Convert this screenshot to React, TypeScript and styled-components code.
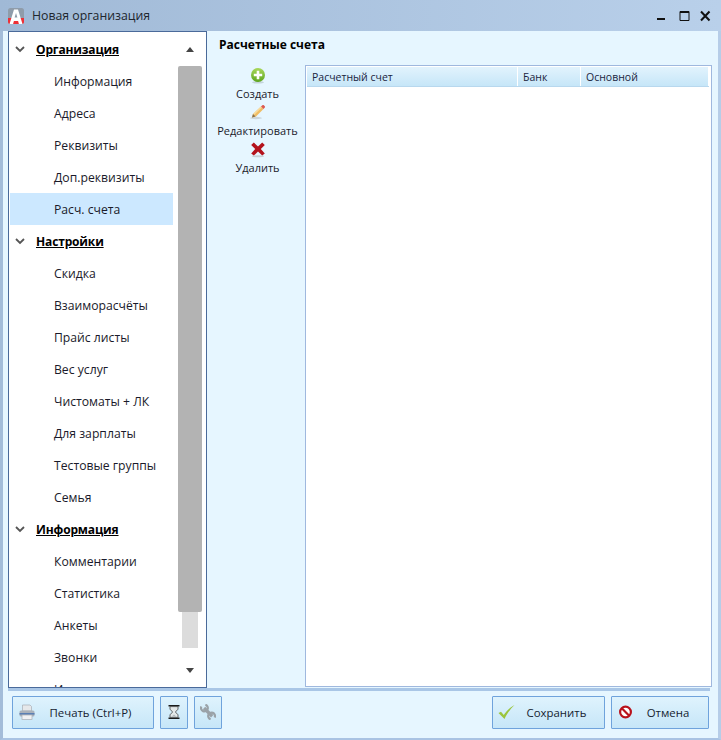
import React from "react";
import styled, { createGlobalStyle } from "styled-components";

const Global = createGlobalStyle`
  html, body { margin: 0; padding: 0; background: #e6f6ff; }
  * { box-sizing: border-box; }
`;

const Window = styled.div`
  width: 721px;
  height: 740px;
  display: flex;
  flex-direction: column;
  background: #e6f6ff;
  font-family: "Open Sans", "Noto Sans", sans-serif;
  font-size: 12.2px;
  color: #1a1a2a;
  border-left: 3px solid #a3bcd9;
  border-right: 3px solid #b6cde8;
  border-bottom: 2px solid #a9c3e3;
`;

const TitleBar = styled.div`
  height: 31px;
  margin: 0 -3px;
  flex: none;
  display: flex;
  align-items: center;
  padding: 0 10px 0 8px;
  background: linear-gradient(90deg, #a0b9d6 0%, #b9d0ea 100%);
`;

const TitleText = styled.div`
  margin-left: 8px;
  font-size: 12.3px;
  color: #20262e;
  flex: 1;
`;

const WinButtons = styled.div`
  display: flex;
  align-items: center;
  gap: 10px;
`;

const Body = styled.div`
  height: 657px;
  flex: none;
  display: flex;
  padding-left: 5px;
`;

const Sidebar = styled.div`
  width: 199px;
  height: 657px;
  flex: none;
  display: flex;
  background: #fff;
  border: 1px solid #4a6a9a;
`;

const NavList = styled.div`
  width: 165px;
  padding: 1px 0 0 1px;
  overflow: hidden;
`;

const Row = styled.div<{ $selected?: boolean }>`
  height: 32px;
  width: 163px;
  display: flex;
  align-items: center;
  background: ${(p) => (p.$selected ? "#cce8ff" : "transparent")};
  padding-left: 44px;
  white-space: nowrap;
`;

const GroupRow = styled.div`
  height: 32px;
  width: 163px;
  display: flex;
  align-items: center;
  padding-left: 3px;
  gap: 9px;
  font-weight: 700;
  font-size: 12px;
  letter-spacing: -0.15px;
  color: #000;
  text-decoration: underline;
`;

const ScrollColumn = styled.div`
  width: 32px;
  display: flex;
  flex-direction: column;
  align-items: center;
`;

const ArrowSlot = styled.div<{ $h: number }>`
  height: ${(p) => p.$h}px;
  flex: none;
  display: flex;
  align-items: center;
  justify-content: center;
`;

const Track = styled.div`
  width: 16px;
  height: 582px;
  flex: none;
  background: #dcdcdc;
  display: flex;
  flex-direction: column;
  align-items: center;
`;

const Thumb = styled.div`
  width: 24px;
  height: 546px;
  flex: none;
  background: #b3b3b3;
  border-radius: 2px;
`;

const Main = styled.div`
  flex: 1;
  display: flex;
  flex-direction: column;
  padding: 0 7px 0 12px;
`;

const Heading = styled.div`
  height: 34px;
  flex: none;
  padding-bottom: 8px;
  display: flex;
  align-items: center;
  font-weight: 700;
  font-size: 12px;
  color: #000;
`;

const Content = styled.div`
  flex: 1;
  display: flex;
`;

const ActionBar = styled.div`
  width: 77px;
  margin-right: 9px;
  flex: none;
  display: flex;
  flex-direction: column;
  align-items: center;
  padding-top: 1px;
`;

const ActionItem = styled.div`
  height: 37px;
  display: flex;
  flex-direction: column;
  align-items: center;
  white-space: nowrap;
  font-size: 11px;
  line-height: 20px;
`;

const ActionIcon = styled.svg`
  width: 18px;
  height: 18px;
  flex: none;
`;

const Table = styled.div`
  flex: 1;
  height: 622px;
  background: #fff;
  border: 1px solid #9fb8de;
  padding: 1px;
  display: flex;
  flex-direction: column;
`;

const TableHeader = styled.div`
  height: 20px;
  flex: none;
  display: flex;
  background: linear-gradient(180deg, #e2f3fd 0%, #c6e6f8 100%);
  border-bottom: 1px solid #b8d8ee;
  margin-right: 1px;
`;

const HeaderCell = styled.div<{ $w: number }>`
  width: ${(p) => p.$w}px;
  flex: none;
  display: flex;
  align-items: center;
  padding-left: 5px;
  border-right: 1px solid #fff;
  font-size: 10.5px;
  color: #1a2440;
`;

const Footer = styled.div`
  flex: 1;
  display: flex;
  align-items: center;
  justify-content: space-between;
  margin: 0 8px 0 5px;
  border-top: 3px solid #a9c6e6;
  padding: 0 1px 5px 4px;
`;

const FooterGroup = styled.div`
  display: flex;
  gap: 6px;
`;

const FooterButton = styled.button<{ $w: number }>`
  width: ${(p) => p.$w}px;
  height: 33px;
  display: flex;
  align-items: center;
  padding: 0;
  border: 1px solid #6fa3dc;
  border-radius: 1px;
  background: linear-gradient(180deg, #dff3fd 0%, #c6e6f8 100%);
  font: inherit;
  font-size: 11.4px;
  color: #141c30;
`;

const BtnIcon = styled.svg<{ $ml: number; $size: number }>`
  width: ${(p) => p.$size}px;
  height: ${(p) => p.$size}px;
  margin-left: ${(p) => p.$ml}px;
  flex: none;
`;

const BtnLabel = styled.span<{ $pr: number }>`
  flex: 1;
  padding-right: ${(p) => p.$pr}px;
  text-align: center;
  white-space: nowrap;
`;

const Chevron = () => (
  <svg width="14" height="14" viewBox="0 0 14 14">
    <path d="M3 5l4 4 4-4" fill="none" stroke="#555" strokeWidth="1.8" />
  </svg>
);

const groups: { t: string; items: string[] }[] = [
  { t: "Организация", items: ["Информация", "Адреса", "Реквизиты", "Доп.реквизиты", "Расч. счета"] },
  { t: "Настройки", items: ["Скидка", "Взаиморасчёты", "Прайс листы", "Вес услуг", "Чистоматы + ЛК", "Для зарплаты", "Тестовые группы", "Семья"] },
  { t: "Информация", items: ["Комментарии", "Статистика", "Анкеты", "Звонки", "История"] },
];

export default function App() {
  return (
    <Window>
      <Global />
      <TitleBar>
        <svg width="16" height="16" viewBox="0 0 16 16">
          <defs>
            <clipPath id="logoClip"><rect width="16" height="16" rx="2.5" /></clipPath>
          </defs>
          <g clipPath="url(#logoClip)">
            <rect width="16" height="16" fill="#8f9caa" />
            <rect y="10" width="16" height="6" fill="#ee2f36" />
            <path d="M1.5 16L6 1.5h4L14.5 16h-3.6l-.8-3H5.9l-.8 3zM6.6 9.5h2.8L8 5z" fill="#fff" fillRule="evenodd" />
            <rect x="6.3" y="13" width="3.4" height="3" fill="#ee2f36" />
          </g>
        </svg>
        <TitleText>Новая организация</TitleText>
        <WinButtons>
          <svg width="12" height="12" viewBox="0 0 12 12"><rect x="0" y="8" width="8" height="2" fill="#111" /></svg>
          <svg width="11" height="12" viewBox="0 0 11 12"><path d="M1 1.5h9v9H1z" fill="none" stroke="#111" /><rect x="1" y="1" width="9" height="2" fill="#111" /></svg>
          <svg width="11" height="12" viewBox="0 0 11 12"><path d="M1 1.5l8.5 9M9.5 1.5l-8.5 9" stroke="#111" strokeWidth="2" /></svg>
        </WinButtons>
      </TitleBar>
      <Body>
        <Sidebar>
          <NavList>
            {groups.map((g) => (
              <React.Fragment key={g.t}>
                <GroupRow><Chevron /><span>{g.t}</span></GroupRow>
                {g.items.map((i) => (
                  <Row key={i} $selected={i === "Расч. счета"}>{i}</Row>
                ))}
              </React.Fragment>
            ))}
          </NavList>
          <ScrollColumn>
            <ArrowSlot $h={34}>
              <svg width="8" height="5" viewBox="0 0 8 5"><path d="M4 0l4 5H0z" fill="#444" /></svg>
            </ArrowSlot>
            <Track><Thumb /></Track>
            <ArrowSlot $h={44}>
              <svg width="8" height="5" viewBox="0 0 8 5"><path d="M4 5L0 0h8z" fill="#444" /></svg>
            </ArrowSlot>
          </ScrollColumn>
        </Sidebar>
        <Main>
          <Heading>Расчетные счета</Heading>
          <Content>
            <ActionBar>
              <ActionItem>
                <ActionIcon viewBox="0 0 18 18">
                  <defs>
                    <linearGradient id="plusG" x1="0" y1="0" x2="0" y2="1">
                      <stop offset="0" stopColor="#a9d85c" />
                      <stop offset="1" stopColor="#5da51e" />
                    </linearGradient>
                  </defs>
                  <ellipse cx="9" cy="16.3" rx="6" ry="1.2" fill="#c4d4dc" />
                  <circle cx="9" cy="9" r="7" fill="url(#plusG)" />
                  <path d="M7.7 4.8h2.6v2.9h2.9v2.6h-2.9v2.9H7.7v-2.9H4.8V7.7h2.9z" fill="#fff" />
                </ActionIcon>
                Создать
              </ActionItem>
              <ActionItem>
                <ActionIcon viewBox="0 0 18 18">
                  <ellipse cx="7" cy="15" rx="6" ry="1.2" fill="#ccd6dc" />
                  <path d="M3 14.5l1-3.5 8-7.5 2.5 2.5-7.5 7.5z" fill="#f0bd64" />
                  <path d="M4 11l8-7.5 1 1-8 7.5z" fill="#f8dc9c" />
                  <path d="M12 3.5l1.4-1.3c.5-.4 1-.4 1.4 0l1 1c.4.4.4.9 0 1.3L14.5 6z" fill="#dc5a50" />
                  <path d="M3 14.5l1-3.5 2.5 2.5z" fill="#86704e" />
                </ActionIcon>
                Редактировать
              </ActionItem>
              <ActionItem>
                <ActionIcon viewBox="0 0 18 18">
                  <ellipse cx="9" cy="16.2" rx="6" ry="1" fill="#c8d0d6" />
                  <path d="M2.2 5l2.6-2.5L9 6.4l4.2-3.9L15.8 5 11.8 9l4 4.6-2.6 2-4.2-4-4.2 4-2.6-2 4-4.6z" fill="#b3121c" />
                </ActionIcon>
                Удалить
              </ActionItem>
            </ActionBar>
            <Table>
              <TableHeader>
                <HeaderCell $w={211}>Расчетный счет</HeaderCell>
                <HeaderCell $w={63}>Банк</HeaderCell>
                <HeaderCell $w={128}>Основной</HeaderCell>
              </TableHeader>
            </Table>
          </Content>
        </Main>
      </Body>
      <Footer>
        <FooterGroup>
          <FooterButton $w={142}>
            <BtnIcon $ml={6} $size={16} viewBox="0 0 16 16">
              <path d="M3.5 1h7.5l1.5 1.5V7h-9z" fill="#e6e8ea" stroke="#a8adb4" strokeWidth=".7" />
              <rect x="0.5" y="6.5" width="15" height="6" rx="1.5" fill="#aab1ba" />
              <rect x="0.5" y="9" width="15" height="1.6" fill="#5a7fb4" />
              <rect x="3" y="11" width="10" height="4.5" fill="#f0f1f3" stroke="#a8adb4" strokeWidth=".7" />
            </BtnIcon>
            <BtnLabel $pr={7}>Печать (Ctrl+P)</BtnLabel>
          </FooterButton>
          <FooterButton $w={28}>
            <BtnIcon $ml={5} $size={16} viewBox="0 0 16 16">
              <path d="M2.5 1h11v1.6h-11zM2.5 13.4h11V15h-11z" fill="#1a1a1a" />
              <path d="M4 2.6h8v2.6L9.4 8l2.6 2.8v2.6H4v-2.6L6.6 8 4 5.2z" fill="#e4e8e8" stroke="#444" strokeWidth=".8" />
              <path d="M5.5 12.8L8 10.5l2.5 2.3z" fill="#b4bcc0" />
            </BtnIcon>
          </FooterButton>
          <FooterButton $w={28}>
            <BtnIcon $ml={5} $size={16} viewBox="0 0 16 16">
              <path d="M4 4l8.2 8.2" stroke="#9aa2a8" strokeWidth="3.4" />
              <path d="M2 1.7A3.4 3.4 0 1 0 6.4 1.4" fill="none" stroke="#9aa2a8" strokeWidth="2.2" transform="rotate(-20 4 4)" />
              <path d="M14 14.3A3.4 3.4 0 1 0 9.6 14.6" fill="none" stroke="#9aa2a8" strokeWidth="2.2" transform="rotate(-20 12 12)" />
            </BtnIcon>
          </FooterButton>
        </FooterGroup>
        <FooterGroup>
          <FooterButton $w={113}>
            <BtnIcon $ml={5} $size={17} viewBox="0 0 17 17">
              <path d="M0.5 9l2.5-1.2 2.8 3.2C8 7.5 11.5 3.8 16.5 1c-3.8 3.6-7.5 8.4-10 14z" fill="#9bc53d" />
            </BtnIcon>
            <BtnLabel $pr={6}>Сохранить</BtnLabel>
          </FooterButton>
          <FooterButton $w={98}>
            <BtnIcon $ml={6} $size={15} viewBox="0 0 15 15">
              <circle cx="7.5" cy="7" r="5.4" fill="#fff" stroke="#b9121c" strokeWidth="2.2" />
              <path d="M3.8 3.3l7.4 7.4" stroke="#b9121c" strokeWidth="2.2" />
            </BtnIcon>
            <BtnLabel $pr={5}>Отмена</BtnLabel>
          </FooterButton>
        </FooterGroup>
      </Footer>
    </Window>
  );
}
